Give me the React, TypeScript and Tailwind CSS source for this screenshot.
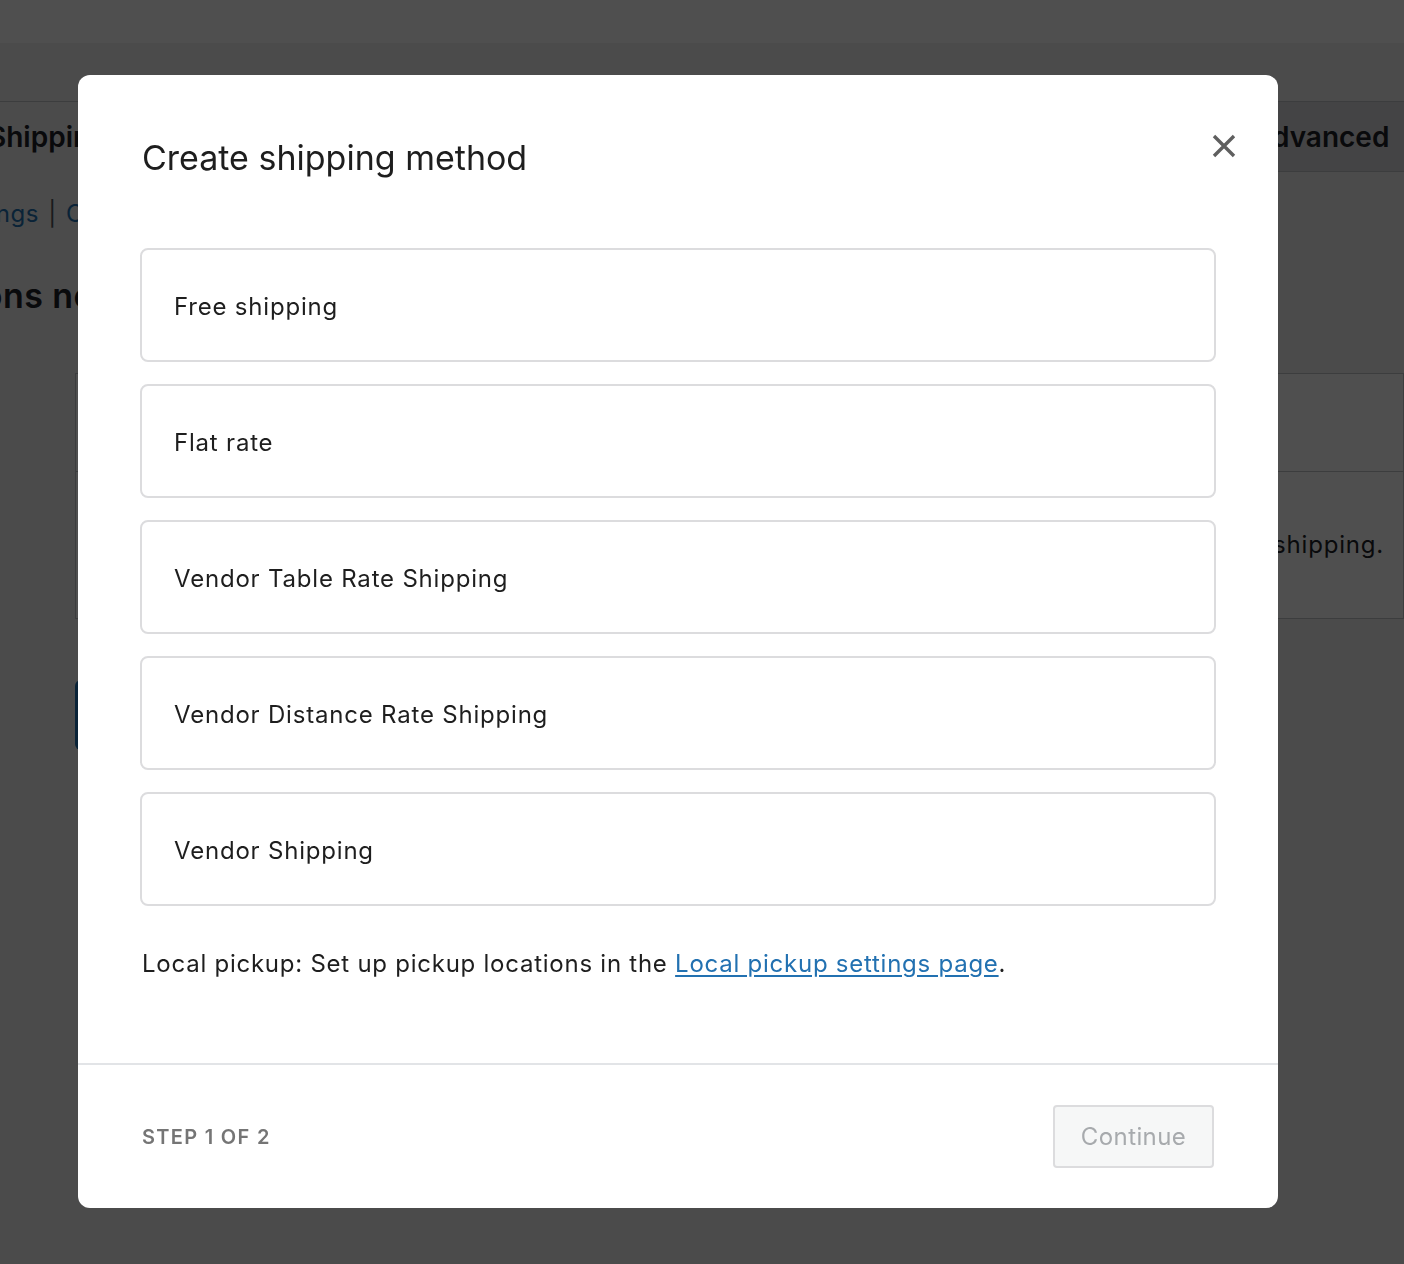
const methods = [
  "Free shipping",
  "Flat rate",
  "Vendor Table Rate Shipping",
  "Vendor Distance Rate Shipping",
  "Vendor Shipping",
];

function BackgroundPage() {
  return (
    <div className="min-h-[1264px] bg-[#f0f0f1] text-[#1d2327] overflow-hidden">
      <div className="h-[43px] bg-white" />
      <div className="h-[58px]" />
      <div className="flex h-[71px] border-t border-[#c3c4c7]">
        <div className="flex-1 flex items-center">
          <span className="ml-[-12px] text-[28px] font-semibold">Shipping</span>
        </div>
        <div className="w-[160px] flex items-center border-b border-l border-[#c3c4c7] bg-[#dcdcde] pl-[7px]">
          <span className="text-[28px] font-semibold text-[#1d2327]">Advanced</span>
        </div>
      </div>
      <div className="mt-[24px] ml-[-57px] text-[24px] text-[#2271b1] tracking-[0.5px]">
        Settings <span className="text-[#50575e] px-[2px]">|</span> Classes
      </div>
      <div className="mt-[38px] ml-[-88px] text-[34px] font-semibold tracking-[0.4px]">Options not set</div>
      <div className="ml-[75px] mt-[52px] border border-[#c3c4c7] bg-white">
        <div className="h-[98px] border-b border-[#c3c4c7]" />
        <div className="h-[146px] flex items-center justify-end pr-[19px] text-[24px] tracking-[0.8px]">
          Add zones to offer shipping.
        </div>
      </div>
      <div className="ml-[75px] mt-[61px] h-[70px] w-[220px] rounded-[6px] bg-[#2271b1]" />
    </div>
  );
}

export default function App() {
  return (
    <div className="relative min-h-[1264px] font-['Inter',sans-serif]">
      <BackgroundPage />
      <div className="fixed inset-0 bg-black/[0.69]" />
      <div className="fixed left-[78px] top-[75px] w-[1200px] h-[1133px] rounded-[12px] bg-white flex flex-col overflow-hidden">
        <div className="flex items-start justify-between pl-[64px] pr-[42px] pt-[60px]">
          <h1 className="text-[34px] leading-[46px] font-normal text-[#1e1e1e]">
            Create shipping method
          </h1>
          <button className="mt-[-1px] text-[#5f5f5f]">
            <svg width="24" height="24" viewBox="0 0 24 24" fill="none">
              <path d="M2 2 L22 22 M22 2 L2 22" stroke="currentColor" strokeWidth="3.4" />
            </svg>
          </button>
        </div>
        <div className="px-[62px] pt-[67px] flex flex-col gap-[22px]">
          {methods.map((m) => (
            <div
              key={m}
              className="h-[114px] flex items-center rounded-[8px] border-2 border-[#dcdcde] pl-[32px] pt-[4px] text-[24px] tracking-[0.8px] text-[#1e1e1e]"
            >
              {m}
            </div>
          ))}
        </div>
        <p className="px-[64px] mt-[40px] text-[24px] tracking-[0.75px] text-[#1e1e1e] leading-[36px]">
          Local pickup: Set up pickup locations in the{" "}
          <a href="#" className="text-[#2271b1] underline underline-offset-[3px]">
            Local pickup settings page
          </a>
          .
        </p>
        <div className="mt-auto h-[145px] border-t-2 border-[#e2e4e7] flex items-center justify-between pl-[64px] pr-[64px]">
          <span className="text-[20px] font-semibold tracking-[1.3px] text-[#757575] uppercase">
            Step 1 of 2
          </span>
          <button className="h-[63px] w-[161px] rounded-[4px] border-2 border-[#dcdcde] bg-[#f6f7f7] text-[24px] tracking-[0.4px] text-[#a7aaad]">
            Continue
          </button>
        </div>
      </div>
    </div>
  );
}
